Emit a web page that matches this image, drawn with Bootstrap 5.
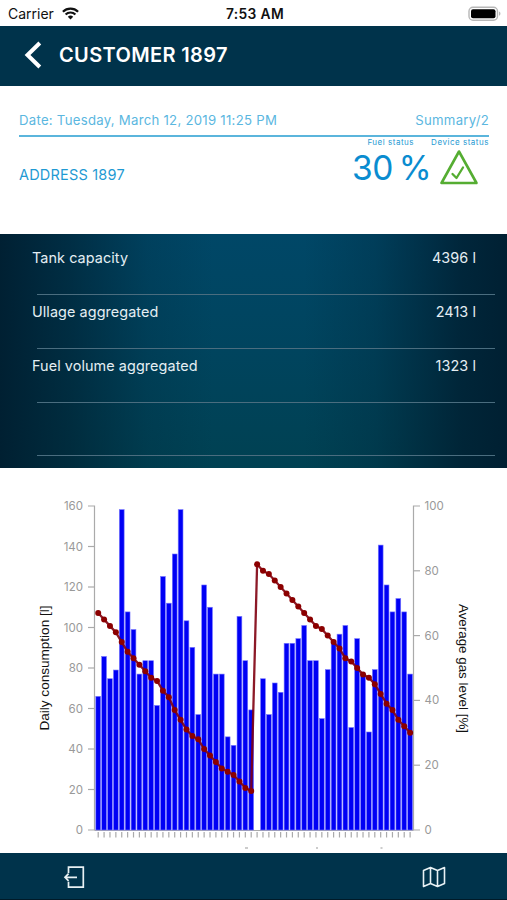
<!DOCTYPE html>
<html lang="en">
<head>
<meta charset="utf-8">
<meta name="viewport" content="width=device-width, initial-scale=1">
<title>Customer 1897</title>
<link href="https://cdn.jsdelivr.net/npm/bootstrap@5.3.0/dist/css/bootstrap.min.css" rel="stylesheet">
<style>
  body { font-family: Inter, "Liberation Sans", sans-serif; color: #111; height: 900px; overflow: hidden; line-height: 1.2; }
  svg { display: block; }
  .status-bar { height: 26px; font-size: 14px; padding: 2px 5px 0 8px; }
  .status-bar .side { flex: 1 1 0; }
  .clock { font-weight: 600; font-size: 13.8px; letter-spacing: .35px; }
  .top-bar { height: 60px; background: #00334b; padding: 0 24px 2px; }
  .top-title { font-size: 20px; font-weight: 600; letter-spacing: .35px; margin-left: 16px; }
  .summary { height: 148px; padding: 27px 18px 0 19px; color: #1f9ad3; }
  .date-line { height: 24px; font-size: 13.2px; color: #5bb7df; border-bottom: 2px solid #5bb5dc; letter-spacing: .26px; }
  .address { font-size: 14.5px; padding-top: 29px; letter-spacing: .2px; }
  .tiny-label { font-size: 8px; letter-spacing: .52px; line-height: 10px; white-space: nowrap; }
  .fuel .tiny-label { padding-right: 17px; }
  .percent { font-size: 33.5px; line-height: 43px; color: #0a8cd0; font-weight: 400; white-space: nowrap; letter-spacing: -.5px; word-spacing: -3px; }
  .tank-panel { height: 234px; color: #e4eef3; font-size: 14.4px; letter-spacing: .08px;
    background: linear-gradient(90deg, rgba(0,30,48,.95) 0%, rgba(0,31,48,.62) 14%, rgba(0,40,60,.22) 29%, transparent 42%, transparent 60%, rgba(0,40,60,.3) 74%, rgba(0,30,48,.8) 91%, rgba(0,30,48,.95) 100%), linear-gradient(180deg, #004767, #00445e 50%, #004152); }
  .tank-row { padding: 15px 31px 0 32px; }
  .tank-item:first-child .tank-row { height: 60px; }
  .rule-line { height: 1px; background: #4a6d7f; margin: 0 12px 0 37px; }
  .tank-item:not(:first-child) .tank-row { height: 52.8px; padding-top: 8px; }
  .chart-area { height: 385px; }
  .axis-num { font-size: 11.5px; fill: #999; }
  .axis-name { font-family: "Liberation Sans", sans-serif; font-size: 13px; fill: #111; }
  .bottom-bar { height: 47px; background: #00334b; border-bottom: 1px solid #001a28; padding: 1px 61px 0 63px; }
</style>
<script src="https://cdn.jsdelivr.net/npm/bootstrap@5.3.0/dist/js/bootstrap.bundle.min.js"></script>
</head>
<body class="bg-white d-flex flex-column">
  <div class="status-bar d-flex align-items-center flex-shrink-0">
    <div class="side d-flex align-items-center gap-2">
      <span>Carrier</span>
      <svg width="17" height="13" viewBox="0 0 17 13" fill="none" stroke="#111" stroke-width="2.2"><path d="M.9 4.7a10.8 10.8 0 0 1 15.2 0M3.6 7.5a7 7 0 0 1 9.8 0"/><path d="M8.5 12.5 5.8 9.7a3.9 3.9 0 0 1 5.4 0Z" fill="#111" stroke="none"/></svg>
    </div>
    <span class="clock">7:53 AM</span>
    <div class="side d-flex justify-content-end">
      <svg width="34" height="16" viewBox="0 0 34 16"><rect x="1" y="1.2" width="28.5" height="13" rx="4" fill="#fff" stroke="#b7b7b7" stroke-width="1.4"/><rect x="3" y="3.2" width="24.5" height="9" rx="2" fill="#000"/><path d="M31.2 5.6c1.6.6 1.6 3.6 0 4.2Z" fill="#aaa"/></svg>
    </div>
  </div>

  <header class="top-bar d-flex align-items-center flex-shrink-0 text-white">
    <svg width="19" height="28" viewBox="0 0 19 28" fill="none" stroke="#fff" stroke-width="4"><path d="M15.8 2 3.5 14l12.3 12"/></svg>
    <h1 class="top-title mb-0">CUSTOMER 1897</h1>
  </header>

  <section class="summary flex-shrink-0">
    <div class="date-line d-flex justify-content-between"><span>Date: Tuesday, March 12, 2019 11:25 PM</span><span>Summary/2</span></div>
    <div class="d-flex justify-content-between">
      <div class="address">ADDRESS 1897</div>
      <div class="d-flex">
        <div class="fuel d-flex flex-column align-items-end">
          <div class="tiny-label">Fuel status</div>
          <div class="percent">30 %</div>
        </div>
        <div class="d-flex flex-column align-items-start">
          <div class="tiny-label">Device status</div>
          <svg class="ms-2" width="40" height="38" viewBox="0 0 40 38" fill="none" stroke="#55ad32" stroke-width="2.6" stroke-linejoin="round" stroke-linecap="round"><path d="M20 4.5 37.5 36H2.5Z"/><path d="m13.5 27 4 4L24 20.5" stroke-width="2.3"/></svg>
        </div>
      </div>
    </div>
  </section>

  <section class="tank-panel flex-shrink-0">
    <div class="tank-item"><div class="tank-row d-flex justify-content-between"><span>Tank capacity</span><span>4396 l</span></div><div class="rule-line"></div></div>
    <div class="tank-item"><div class="tank-row d-flex justify-content-between"><span>Ullage aggregated</span><span>2413 l</span></div><div class="rule-line"></div></div>
    <div class="tank-item"><div class="tank-row d-flex justify-content-between"><span>Fuel volume aggregated</span><span>1323 l</span></div><div class="rule-line"></div></div>
    <div class="tank-item"><div class="tank-row"></div><div class="rule-line"></div></div>
  </section>

  <section class="chart-area flex-shrink-0">
    <svg id="chart" width="507" height="385" viewBox="0 468 507 385"></svg>
  </section>

  <footer class="bottom-bar d-flex justify-content-between align-items-center flex-shrink-0">
    <svg width="22" height="24" viewBox="0 0 22 24" fill="none" stroke="#e8f1f4" stroke-width="1.7"><path d="M5.5 8V2.2h14.8v20H5.5v-5.5M2 12.3h12M5.6 8.7 2 12.3l3.6 3.6"/></svg>
    <svg width="24" height="22" viewBox="0 0 24 22" fill="none" stroke="#e8f1f4" stroke-width="1.6" stroke-linejoin="round"><path d="m1.5 4.5 7-3 7 3 7-3v16l-7 3-7-3-7 3ZM8.5 1.5v16M15.5 4.5v16"/></svg>
  </footer>

<script>
  // Daily consumption in litres; null marks the refill day
  const litres = [66,85.7,74.7,79,158.2,107.7,99,77,83.6,83.6,61.5,125.2,112,136.3,158.2,103.3,90.2,57,121,110,77,77,46,41.8,105.5,83.6,59.3,null,74.7,57,72.6,68,92.2,92.2,94.5,101,83.6,83.6,55,79.2,92.3,96.7,101,50.6,94.5,77,48.4,79.2,140.7,121,107.7,114.3,107.7,77];
  // Gas level in percent
  const level = [67,65,63,61,58,55,53,51,49,47,46,43,41,37,34,31,29,28,25,23,21,19,18,17,15,13,12,82,80,79,77,75,73,71,69,67,65,63,62,60,58,56,53,52,50,48,47,45,42,39,37,34,32,30];
  const base = 830, x = i => 98.2 + i * 5.885, yl = v => base - v * 2.025, yr = v => base - v * 3.24;
  let s = '<g stroke="#aaa" stroke-width="1.2" fill="none"><path d="M88 506h6.5v324H88"/><path d="M94.5 830.5h319"/><path d="M420 506h-6.5v324h6.5"/>';
  for (let v = 20; v < 160; v += 20) s += `<path d="M88 ${yl(v)}h6.5"/>`;
  for (let v = 20; v < 100; v += 20) s += `<path d="M413.5 ${yr(v)}h6.5"/>`;
  level.forEach((_, i) => s += `<path d="M${x(i)} 832v5.5"/>`);
  s += '</g><g fill="#0000f5" stroke="#7777ff" stroke-width=".6">';
  litres.forEach((v, i) => { if (v) s += `<rect x="${x(i) - 2.4}" y="${yl(v)}" width="4.8" height="${v * 2.025}"/>`; });
  s += `</g><polyline fill="none" stroke="#800010" stroke-opacity=".9" stroke-width="2.3" points="${level.map((v, i) => x(i) + ',' + yr(v)).join(' ')}"/><g fill="#8b0000">`;
  level.forEach((v, i) => s += `<circle cx="${x(i)}" cy="${yr(v)}" r="3"/>`);
  s += '</g><g class="axis-num">';
  for (let v = 0; v <= 160; v += 20) s += `<text x="83" y="${yl(v) + 4}" text-anchor="end">${v}</text>`;
  for (let v = 0; v <= 100; v += 20) s += `<text x="424.5" y="${yr(v) + 4}">${v}</text>`;
  s += '</g><g class="axis-name" text-anchor="middle"><text transform="translate(49 668) rotate(-90)" textLength="125" lengthAdjust="spacingAndGlyphs">Daily consumption [l]</text><text transform="translate(458.5 668.5) rotate(90)" textLength="129" lengthAdjust="spacingAndGlyphs">Average gas level [%]</text></g>';
  s += '<g fill="#999"><rect x="245" y="847.5" width="3" height="1"/><rect x="316" y="847.5" width="2" height="1"/><rect x="380.5" y="847.5" width="2" height="1"/></g>';
  document.getElementById('chart').innerHTML = s;
</script>
</body>
</html>
